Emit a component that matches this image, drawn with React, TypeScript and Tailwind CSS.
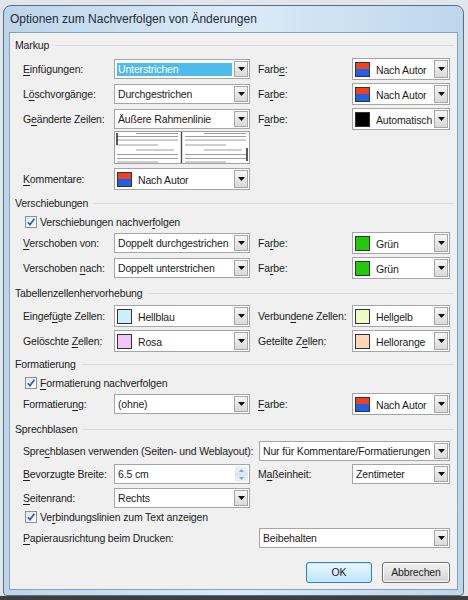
import React from "react";

// Access-key label: underlines one character, like a Win32 dialog
function Lbl({ t, k, className = "" }: { t: string; k: number; className?: string }) {
  return (
    <span className={`shrink-0 whitespace-nowrap ${className}`}>
      {t.slice(0, k)}
      <span className="underline underline-offset-[2px] decoration-[1px]">{t[k]}</span>
      {t.slice(k + 1)}
    </span>
  );
}

function DropBtn() {
  return (
    <div className="m-[1px] flex w-[14px] shrink-0 items-center justify-center self-stretch border border-[#a7a7a7] bg-gradient-to-b from-[#f6f6f6] to-[#d9d9d9]">
      <svg width="7" height="4" viewBox="0 0 7 4">
        <path d="M0 0h7L3.5 4z" fill="#111" />
      </svg>
    </div>
  );
}

function Combo({ w, h = "h-[20px]", children }: { w: string; h?: string; children: React.ReactNode }) {
  return (
    <div className={`flex ${w} ${h} shrink-0 border border-[#a5a5a5] bg-white`}>
      <div className="flex min-w-0 flex-1 items-center overflow-hidden whitespace-nowrap pl-[2px]">{children}</div>
      <DropBtn />
    </div>
  );
}

function Swatch({ top, bottom }: { top: string; bottom?: string }) {
  return (
    <span className="flex h-[15px] w-[15px] shrink-0 flex-col border border-[#333]">
      <span className="flex-1" style={{ background: top }} />
      <span className="flex-1" style={{ background: bottom ?? top }} />
    </span>
  );
}

function ColorCombo({ w, top, bottom, label }: { w: string; top: string; bottom?: string; label: string }) {
  return (
    <Combo w={w} h="h-[22px]">
      <Swatch top={top} bottom={bottom} />
      <span className="ml-[6px] pt-[3px]">{label}</span>
    </Combo>
  );
}

function Header({ title, mt }: { title: string; mt: string }) {
  return (
    <div className={`flex h-[16px] items-center pl-[5px] pr-[3px] ${mt}`}>
      <span>{title}</span>
      <span className="ml-[6px] h-px flex-1 bg-[#dcdcdc]" />
    </div>
  );
}

function Check({ t, k, mt }: { t: string; k: number; mt: string }) {
  return (
    <div className={`flex h-[16px] items-center pl-[15px] ${mt}`}>
      <span className="flex h-[12px] w-[12px] items-center justify-center border border-[#8e8f8f] bg-gradient-to-br from-[#dfe9f5] to-[#ffffff]">
        <svg width="10" height="10" viewBox="0 0 10 10">
          <path d="M1.8 5.2 L4 7.6 L8.4 1.8" fill="none" stroke="#2d5fb3" strokeWidth="1.7" />
        </svg>
      </span>
      <Lbl t={t} k={k} className="ml-[3px]" />
    </div>
  );
}

function Row({ mt, h = "h-[22px]", children }: { mt: string; h?: string; children: React.ReactNode }) {
  return <div className={`flex ${h} items-center pl-[13px] ${mt}`}>{children}</div>;
}

const RB = "#f04020";
const BL = "#2060e8";

function Preview() {
  const gray = "#9d9d9d";
  const lines = (x0: number) => (
    <>
      <line x1={x0 + 22} y1="2.5" x2={x0 + 64} y2="2.5" stroke={gray} />
      <line x1={x0 + 3} y1="5.5" x2={x0 + 64} y2="5.5" stroke={gray} />
      <line x1={x0 + 3} y1="9" x2={x0 + 64} y2="9" stroke={gray} />
      <line x1={x0 + 3} y1="14" x2={x0 + 44} y2="14" stroke={gray} />
      <line x1={x0 + 22} y1="19" x2={x0 + 60} y2="19" stroke={gray} />
      <line x1={x0 + 3} y1="23.5" x2={x0 + 64} y2="23.5" stroke={gray} />
      <line x1={x0 + 3} y1="27.5" x2={x0 + 64} y2="27.5" stroke={gray} />
      <line x1={x0 + 3} y1="31" x2={x0 + 44} y2="31" stroke={gray} />
    </>
  );
  return (
    <svg width="136" height="33" viewBox="0 0 136 33" className="ml-[91px]">
      <rect x="0.5" y="0.5" width="135" height="32" fill="#fff" stroke="#a0a0a0" />
      {lines(0)}
      {lines(68)}
      <line x1="67.5" y1="1" x2="67.5" y2="32" stroke="#4a4a4a" strokeWidth="1.4" />
      <line x1="3" y1="2" x2="3" y2="14" stroke="#000" strokeWidth="1.3" />
      <line x1="133" y1="17" x2="133" y2="30" stroke="#000" strokeWidth="1.3" />
    </svg>
  );
}

function Spin() {
  return (
    <div className="flex h-[20px] w-[136px] shrink-0 border border-[#a5a5a5] bg-white">
      <div className="flex flex-1 items-center pl-[3px]">6.5 cm</div>
      <div className="m-[1px] flex w-[13px] flex-col">
        <div className="flex flex-1 items-center justify-center bg-gradient-to-b from-[#eef4f9] to-[#dbe6ef]">
          <svg width="5" height="3" viewBox="0 0 5 3"><path d="M0 3h5L2.5 0z" fill="#8aa3bb" /></svg>
        </div>
        <div className="flex flex-1 items-center justify-center bg-gradient-to-b from-[#dbe6ef] to-[#eef4f9]">
          <svg width="5" height="3" viewBox="0 0 5 3"><path d="M0 0h5L2.5 3z" fill="#8aa3bb" /></svg>
        </div>
      </div>
    </div>
  );
}

export default function App() {
  return (
    <div className="flex h-[600px] w-[468px] flex-col overflow-hidden bg-[#dfe5eb] font-['Liberation_Sans',Arial,sans-serif] text-[10.5px] leading-[13px] tracking-[-0.15px] text-[#1b1b1b]">
      <div className="flex flex-1 pl-[3px] pt-[5px]">
        {/* Aero frame */}
        <div className="flex w-[461px] flex-col rounded-t-[8px] rounded-b-[4px] border border-[#5c6f82] bg-gradient-to-r from-[#bcd4ea] via-[#dcebf7] to-[#bdd6ec] px-[5px] pb-[5px]">
          <div className="flex h-[26px] items-center pl-[1px] pt-[1px] text-[12px] tracking-normal text-[#1e2a36]">
            Optionen zum Nachverfolgen von Änderungen
          </div>
          {/* client area */}
          <div className="flex flex-1 flex-col border border-[#8aa0b6] bg-[#f0f0f0]">
            <Header title="Markup" mt="mt-[4px]" />
            <Row mt="mt-[5px]">
              <Lbl t="Einfügungen:" k={0} className="w-[91px]" />
              <Combo w="w-[136px]">
                <span className="w-[115px] bg-[#4fbbec] px-[1px] text-white">Unterstrichen</span>
              </Combo>
              <Lbl t="Farbe:" k={4} className="ml-[8px] w-[94px]" />
              <ColorCombo w="w-[98px]" top={RB} bottom={BL} label="Nach Autor" />
            </Row>
            <Row mt="mt-[3px]">
              <Lbl t="Löschvorgänge:" k={1} className="w-[91px]" />
              <Combo w="w-[136px]"><span className="pl-[1px]">Durchgestrichen</span></Combo>
              <Lbl t="Farbe:" k={2} className="ml-[8px] w-[94px]" />
              <ColorCombo w="w-[98px]" top={RB} bottom={BL} label="Nach Autor" />
            </Row>
            <Row mt="mt-[3px]">
              <Lbl t="Geänderte Zeilen:" k={1} className="w-[91px]" />
              <Combo w="w-[136px]"><span className="pl-[1px]">Äußere Rahmenlinie</span></Combo>
              <Lbl t="Farbe:" k={1} className="ml-[8px] w-[94px]" />
              <ColorCombo w="w-[98px]" top="#000" label="Automatisch" />
            </Row>
            <div className="mt-[1px] flex pl-[13px]">
              <Preview />
            </div>
            <Row mt="mt-[4px]">
              <Lbl t="Kommentare:" k={0} className="w-[91px]" />
              <ColorCombo w="w-[136px]" top={RB} bottom={BL} label="Nach Autor" />
            </Row>

            <Header title="Verschiebungen" mt="mt-[5px]" />
            <Check t="Verschiebungen nachverfolgen" k={22} mt="mt-[3px]" />
            <Row mt="mt-[2px]">
              <Lbl t="Verschoben von:" k={0} className="w-[91px]" />
              <Combo w="w-[136px]"><span className="pl-[1px]">Doppelt durchgestrichen</span></Combo>
              <Lbl t="Farbe:" k={2} className="ml-[8px] w-[94px]" />
              <ColorCombo w="w-[98px]" top="#22c80a" label="Grün" />
            </Row>
            <Row mt="mt-[3px]">
              <Lbl t="Verschoben nach:" k={11} className="w-[91px]" />
              <Combo w="w-[136px]"><span className="pl-[1px]">Doppelt unterstrichen</span></Combo>
              <Lbl t="Farbe:" k={2} className="ml-[8px] w-[94px]" />
              <ColorCombo w="w-[98px]" top="#22c80a" label="Grün" />
            </Row>

            <Header title="Tabellenzellenhervorhebung" mt="mt-[6px]" />
            <Row mt="mt-[4px]">
              <Lbl t="Eingefügte Zellen:" k={6} className="w-[91px]" />
              <ColorCombo w="w-[136px]" top="#cdeefc" label="Hellblau" />
              <Lbl t="Verbundene Zellen:" k={6} className="ml-[8px] w-[94px]" />
              <ColorCombo w="w-[98px]" top="#eefac8" label="Hellgelb" />
            </Row>
            <Row mt="mt-[3px]">
              <Lbl t="Gelöschte Zellen:" k={10} className="w-[91px]" />
              <ColorCombo w="w-[136px]" top="#f2c6f4" label="Rosa" />
              <Lbl t="Geteilte Zellen:" k={10} className="ml-[8px] w-[94px]" />
              <ColorCombo w="w-[98px]" top="#fcd8b8" label="Hellorange" />
            </Row>

            <Header title="Formatierung" mt="mt-[4px]" />
            <Check t="Formatierung nachverfolgen" k={0} mt="mt-[3px]" />
            <Row mt="mt-[2px]">
              <Lbl t="Formatierung:" k={10} className="w-[91px]" />
              <Combo w="w-[136px]"><span className="pl-[1px]">(ohne)</span></Combo>
              <Lbl t="Farbe:" k={0} className="ml-[8px] w-[94px]" />
              <ColorCombo w="w-[98px]" top={RB} bottom={BL} label="Nach Autor" />
            </Row>

            <Header title="Sprechblasen" mt="mt-[6px]" />
            <Row mt="mt-[4px]" h="h-[20px]">
              <Lbl t="Sprechblasen verwenden (Seiten- und Weblayout):" k={4} className="w-[236px]" />
              <Combo w="w-[191px]"><span className="pl-[1px]">Nur für Kommentare/Formatierungen</span></Combo>
            </Row>
            <Row mt="mt-[3px]" h="h-[20px]">
              <Lbl t="Bevorzugte Breite:" k={0} className="w-[91px]" />
              <Spin />
              <Lbl t="Maßeinheit:" k={1} className="ml-[8px] w-[94px]" />
              <Combo w="w-[98px]"><span className="pl-[1px]">Zentimeter</span></Combo>
            </Row>
            <Row mt="mt-[4px]" h="h-[20px]">
              <Lbl t="Seitenrand:" k={0} className="w-[91px]" />
              <Combo w="w-[136px]"><span className="pl-[1px]">Rechts</span></Combo>
            </Row>
            <Check t="Verbindungslinien zum Text anzeigen" k={2} mt="mt-[1px]" />
            <Row mt="mt-[3px]" h="h-[20px]">
              <Lbl t="Papierausrichtung beim Drucken:" k={0} className="w-[236px]" />
              <Combo w="w-[191px]"><span className="pl-[1px]">Beibehalten</span></Combo>
            </Row>

            <div className="mt-[14px] flex justify-end gap-[10px] pr-[7px]">
              <button className="h-[21px] w-[66px] rounded-[3px] border border-[#3c7fb1] bg-gradient-to-b from-[#eaf6fd] to-[#bee6fd] shadow-[inset_0_0_0_1px_#c5ecfc]">
                OK
              </button>
              <button className="h-[21px] w-[68px] rounded-[3px] border border-[#707070] bg-gradient-to-b from-[#f2f2f2] to-[#d4d4d4] shadow-[inset_0_0_0_1px_#fcfcfc]">
                Abbrechen
              </button>
            </div>
          </div>
        </div>
      </div>
      <div className="h-[4px] bg-[#3e3e3e]" />
    </div>
  );
}
